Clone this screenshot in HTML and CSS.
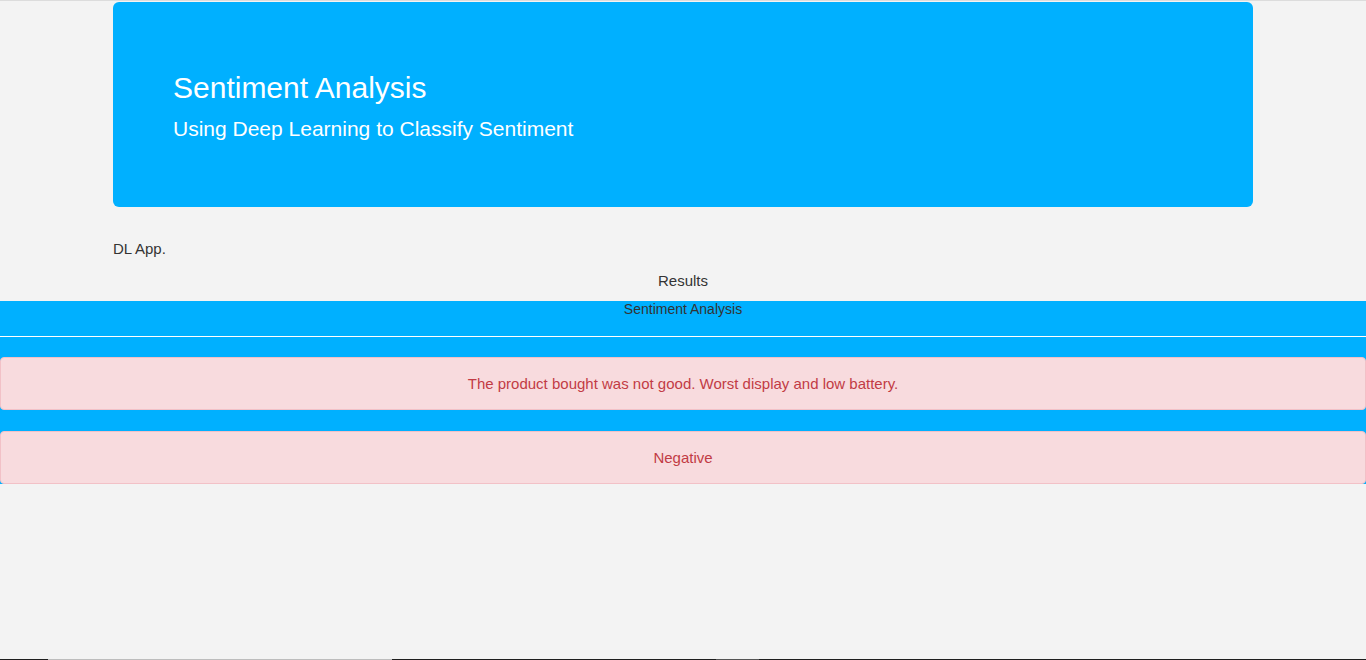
FILE: index.html
```html
<!DOCTYPE html>
<html lang="en">
<head>
<meta charset="utf-8">
<title>Sentiment Analysis</title>
<link rel="stylesheet" href="styles.css">
</head>
<body>
<div class="page">
  <header class="jumbotron">
    <h1 class="title">Sentiment Analysis</h1>
    <p class="subtitle">Using Deep Learning to Classify Sentiment</p>
  </header>
  <div class="container">
    <p class="brand">DL App.</p>
  </div>
  <p class="results">Results</p>
  <section class="band">
    <p class="band-title">Sentiment Analysis</p>
    <hr class="rule">
    <div class="alert">The product bought was not good. Worst display and low battery.</div>
    <div class="alert">Negative</div>
  </section>
</div>
<div class="taskbar"></div>
</body>
</html>
```

FILE: styles.css
```css
html, body {
  margin: 0;
  padding: 0;
}
body {
  background: #f3f3f3;
  font-family: "Liberation Sans", Arial, sans-serif;
  color: #333;
  border-top: 1px solid #dcdcdc;
  min-height: 659px;
  box-sizing: border-box;
}
.page {
  padding-top: 1px;
}
.jumbotron {
  width: 1140px;
  height: 205px;
  box-sizing: border-box;
  margin: 0 auto;
  padding: 68px 60px 0;
  background: #00b0ff;
  border-radius: 6px;
  color: #fff;
}
.title {
  margin: 0;
  font-size: 30px;
  font-weight: normal;
  line-height: 36px;
}
.subtitle {
  margin: 10px 0 0;
  font-size: 21px;
  line-height: 25px;
}
.container {
  width: 1140px;
  margin: 0 auto;
}
.brand {
  margin: 32px 0 0;
  font-size: 15px;
  line-height: 20px;
}
.results {
  margin: 12px 0 0;
  text-align: center;
  font-size: 15px;
  line-height: 20px;
}
.band {
  margin-top: 10px;
  background: #00b0ff;
}
.band-title {
  margin: 0;
  text-align: center;
  font-size: 14px;
  line-height: 16px;
}
.rule {
  margin: 19px 0 0;
  border: 0;
  border-top: 1px solid #fff;
  height: 0;
}
.alert {
  margin-top: 20px;
  height: 53px;
  box-sizing: border-box;
  display: flex;
  align-items: center;
  justify-content: center;
  background: #f8dbde;
  border: 1px solid #f2c1c7;
  border-radius: 4px;
  color: #c23b45;
  font-size: 15px;
}
.alert + .alert {
  margin-top: 21px;
}
.taskbar {
  position: fixed;
  left: 0;
  right: 0;
  bottom: 0;
  height: 1px;
  background: linear-gradient(to right, #1e1e1e 0, #1e1e1e 48px, #bdbdbd 48px, #bdbdbd 392px, #1e1e1e 392px, #1e1e1e 716px, #555 716px, #555 759px, #1e1e1e 759px);
}
```
